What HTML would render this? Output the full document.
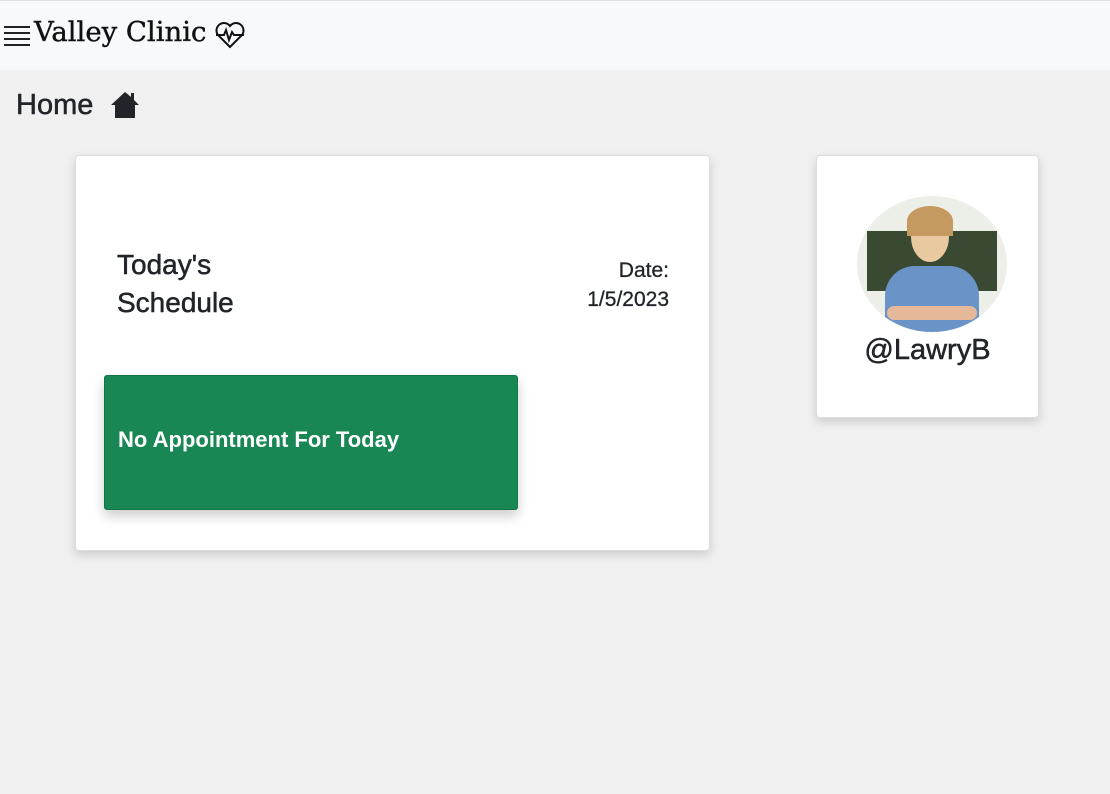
<!DOCTYPE html>
<html><head><style>
body{margin:0;width:1110px;height:794px;background:#f0f0f0;font-family:"Liberation Sans",sans-serif;color:#212529;position:relative;overflow:hidden}
.nav{position:absolute;top:0;left:0;width:1110px;height:70px;background:#f8f9fa;border-top:1px solid #dee2e6;box-sizing:border-box}
.brand{position:absolute;left:34px;top:15px;font-family:"DejaVu Serif",serif;font-size:27.5px;color:#111;white-space:nowrap;-webkit-text-stroke:0.4px #111}
.card{position:absolute;background:#fff;border:1px solid #ddd;border-radius:4px;box-shadow:0 4px 10px rgba(0,0,0,.15)}
</style></head><body>
<div class="nav">
<div style="position:absolute;left:4px;top:25px;width:26px">
<div style="height:2px;background:#222;margin-bottom:4px"></div><div style="height:2px;background:#222;margin-bottom:4px"></div><div style="height:2px;background:#222;margin-bottom:4px"></div><div style="height:2px;background:#222"></div></div>
<div class="brand">Valley Clinic</div>
<svg style="position:absolute;left:214px;top:20px" width="32" height="28" viewBox="0 0 32 28" fill="none" stroke="#111" stroke-width="2"><path d="M16 26 L4 14 A7 7 0 0 1 16 5 A7 7 0 0 1 28 14 Z"/><path d="M2 14 H10 L12 9 L15 19 L18 11 L20 14 H30"/></svg>
</div>
<div style="position:absolute;left:16px;top:89px;font-size:29px;-webkit-text-stroke:0.5px #212529">Home</div>
<svg style="position:absolute;left:110px;top:90px" width="30" height="28" viewBox="0 0 30 28"><path d="M15 2 L1 15 H5 V28 H25 V15 H29 L24 10 V3 H21 V7 Z" fill="#212529"/></svg>
<div class="card" style="left:75px;top:155px;width:633px;height:394px">
<div style="position:absolute;left:41px;top:90px;font-size:28px;line-height:38px;-webkit-text-stroke:0.5px #212529">Today's<br>Schedule</div>
<div style="position:absolute;right:40px;top:100px;font-size:21px;line-height:29px;text-align:right;-webkit-text-stroke:0.3px #212529">Date:<br>1/5/2023</div>
<div style="position:absolute;left:28px;top:219px;width:412px;height:133px;background:#198754;border:1px solid #157347;border-radius:3px;box-shadow:0 6px 12px rgba(0,0,0,.2)">
<div style="position:absolute;left:13px;top:51px;color:#fff;font-size:22px;font-weight:bold">No Appointment For Today</div></div>
</div>
<div class="card" style="left:816px;top:155px;width:221px;height:261px">
<div style="position:absolute;left:40px;top:40px;width:150px;height:136px;border-radius:50%;background:#ecefe8;overflow:hidden">
<div style="position:absolute;left:10px;top:35px;width:130px;height:60px;background:#3a4a32"></div>
<div style="position:absolute;left:28px;top:70px;width:94px;height:70px;border-radius:30px 30px 0 0;background:#6a94c8"></div>
<div style="position:absolute;left:54px;top:16px;width:38px;height:50px;border-radius:50%;background:#e8c9a0"></div>
<div style="position:absolute;left:50px;top:10px;width:46px;height:30px;border-radius:50% 50% 0 0;background:#c59a60"></div>
<div style="position:absolute;left:30px;top:110px;width:90px;height:14px;border-radius:7px;background:#e6b89a"></div></div>
<div style="position:absolute;left:0;width:221px;top:178px;text-align:center;font-size:29px;-webkit-text-stroke:0.5px #212529">@LawryB</div>
</div>
</body></html>
